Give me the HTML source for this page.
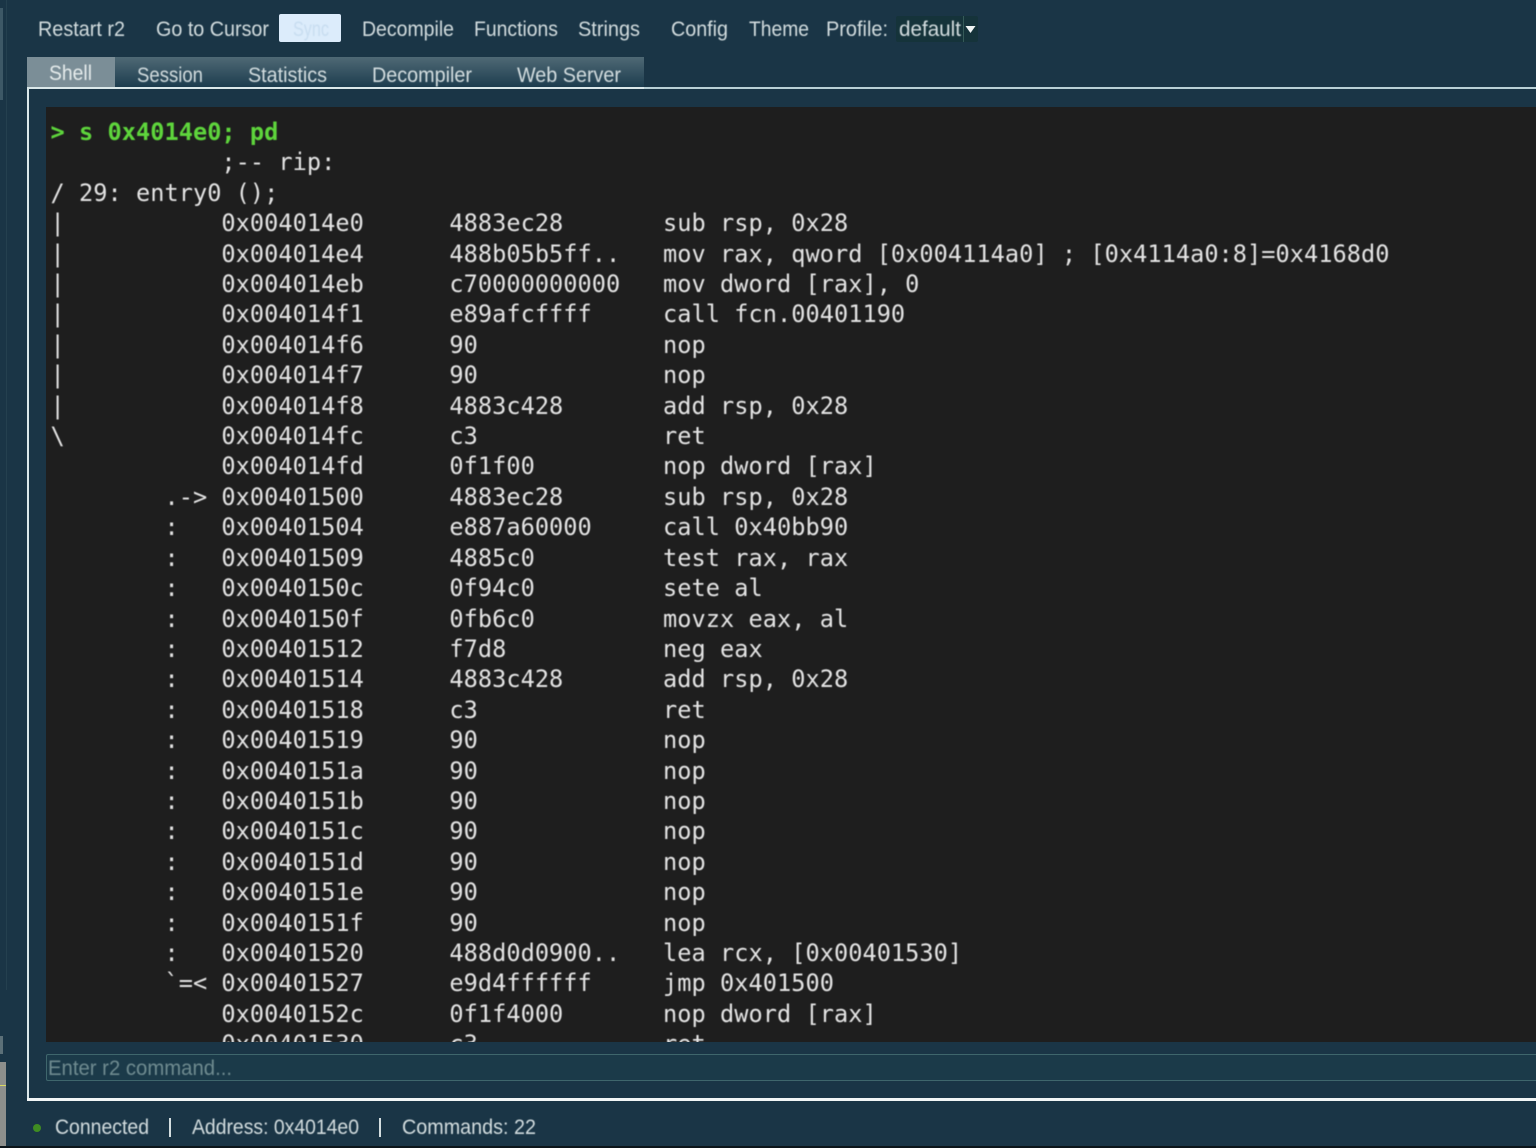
<!DOCTYPE html>
<html><head><meta charset="utf-8"><style>
html,body{margin:0;padding:0;width:1536px;height:1148px;overflow:hidden;background:#1a3546}
div,svg,pre{position:absolute}
#term{left:46px;top:107px;width:1490px;height:935px;background:#1e1e1e;overflow:hidden}
pre{left:4.5px;top:10px;margin:0;font:23.6px/30.4px "DejaVu Sans Mono",monospace;letter-spacing:.04px;color:#e4e4e4;filter:blur(.45px)}
b{color:#5ed53c;font-weight:bold}
svg text{font-family:"Liberation Sans",sans-serif;font-size:21px;fill:#d3dddf;filter:blur(.4px)}
</style></head><body>
<div style="left:0;top:8px;width:3px;height:92px;background:#3d5866"></div>
<div style="left:6px;top:0;width:1px;height:990px;background:#24404f"></div>
<div style="left:0;top:1036px;width:3px;height:18px;background:#5c7078"></div>
<div style="left:0;top:1062px;width:6px;height:84px;background:#8d8f8c"></div>
<div style="left:0;top:1085px;width:6px;height:1px;background:#d8d860"></div>
<div style="left:0;top:1146px;width:1536px;height:2px;background:#0c151a"></div>

<div style="left:279px;top:14px;width:62px;height:28px;background:#dcecfb;border-radius:2px"></div>
<div style="left:896px;top:16px;width:82px;height:26px;background:#15333a;border-radius:2px"></div>
<div style="left:963px;top:16px;width:1px;height:26px;background:#355a58"></div>

<div style="left:27px;top:57px;width:617px;height:31px;background:linear-gradient(#4f6975,#1b3b4d)"></div>
<div style="left:27px;top:57px;width:88px;height:31px;background:#7b8e97"></div>

<div style="left:27px;top:87px;width:1509px;height:1012px;border:solid #dbe8ea;border-width:2px 0 0 2px;box-sizing:border-box"></div>
<div style="left:27px;top:1098px;width:1509px;height:3px;background:#f2f6f6"></div>
<div style="left:644px;top:87px;width:892px;height:2px;background:#b9d0d6"></div>

<div id="term"><pre><b>&gt; s 0x4014e0; pd</b>
            ;-- rip:
/ 29: entry0 ();
|           0x004014e0      4883ec28       sub rsp, 0x28
|           0x004014e4      488b05b5ff..   mov rax, qword [0x004114a0] ; [0x4114a0:8]=0x4168d0
|           0x004014eb      c70000000000   mov dword [rax], 0
|           0x004014f1      e89afcffff     call fcn.00401190
|           0x004014f6      90             nop
|           0x004014f7      90             nop
|           0x004014f8      4883c428       add rsp, 0x28
\           0x004014fc      c3             ret
            0x004014fd      0f1f00         nop dword [rax]
        .-&gt; 0x00401500      4883ec28       sub rsp, 0x28
        :   0x00401504      e887a60000     call 0x40bb90
        :   0x00401509      4885c0         test rax, rax
        :   0x0040150c      0f94c0         sete al
        :   0x0040150f      0fb6c0         movzx eax, al
        :   0x00401512      f7d8           neg eax
        :   0x00401514      4883c428       add rsp, 0x28
        :   0x00401518      c3             ret
        :   0x00401519      90             nop
        :   0x0040151a      90             nop
        :   0x0040151b      90             nop
        :   0x0040151c      90             nop
        :   0x0040151d      90             nop
        :   0x0040151e      90             nop
        :   0x0040151f      90             nop
        :   0x00401520      488d0d0900..   lea rcx, [0x00401530]
        `=&lt; 0x00401527      e9d4ffffff     jmp 0x401500
            0x0040152c      0f1f4000       nop dword [rax]
            0x00401530      c3             ret</pre></div>

<div style="left:46px;top:1054px;width:1490px;height:27px;border:solid #3f666c;border-width:1px 0 1px 1px;box-sizing:border-box;background:#1b3a49;border-radius:2px 0 0 2px"></div>
<div style="left:33px;top:1124px;width:8px;height:8px;border-radius:50%;background:#3f8c22"></div>

<svg width="1536" height="1148" style="left:0;top:0">
<text x="38" y="36" textLength="87" lengthAdjust="spacingAndGlyphs">Restart r2</text>
<text x="156" y="36" textLength="113" lengthAdjust="spacingAndGlyphs">Go to Cursor</text>
<text x="293" y="36" textLength="36" lengthAdjust="spacingAndGlyphs" style="fill:#c8ddf0">Sync</text>
<text x="362" y="36" textLength="92" lengthAdjust="spacingAndGlyphs">Decompile</text>
<text x="474" y="36" textLength="84" lengthAdjust="spacingAndGlyphs">Functions</text>
<text x="578" y="36" textLength="62" lengthAdjust="spacingAndGlyphs">Strings</text>
<text x="671" y="36" textLength="57" lengthAdjust="spacingAndGlyphs">Config</text>
<text x="749" y="36" textLength="60" lengthAdjust="spacingAndGlyphs">Theme</text>
<text x="826" y="36" textLength="62" lengthAdjust="spacingAndGlyphs">Profile:</text>
<text x="899" y="36" textLength="62" lengthAdjust="spacingAndGlyphs">default</text>
<path d="M965.500 26h10l-5 7z" fill="#f0f4f4"/>
<text x="49" y="80" textLength="43" lengthAdjust="spacingAndGlyphs" style="fill:#e6ecec">Shell</text>
<text x="137" y="82" textLength="66" lengthAdjust="spacingAndGlyphs">Session</text>
<text x="248" y="82" textLength="79" lengthAdjust="spacingAndGlyphs">Statistics</text>
<text x="372" y="82" textLength="100" lengthAdjust="spacingAndGlyphs">Decompiler</text>
<text x="517" y="82" textLength="104" lengthAdjust="spacingAndGlyphs">Web Server</text>
<text x="48" y="1075" textLength="184" lengthAdjust="spacingAndGlyphs" style="fill:#6f8b90">Enter r2 command...</text>
<text x="55" y="1134" textLength="94" lengthAdjust="spacingAndGlyphs">Connected</text>
<rect x="169" y="1118" width="2" height="19" fill="#d3dddf"/>
<text x="192" y="1134" textLength="167" lengthAdjust="spacingAndGlyphs">Address: 0x4014e0</text>
<rect x="379" y="1118" width="2" height="19" fill="#d3dddf"/>
<text x="402" y="1134" textLength="134" lengthAdjust="spacingAndGlyphs">Commands: 22</text>
</svg>
</body></html>
